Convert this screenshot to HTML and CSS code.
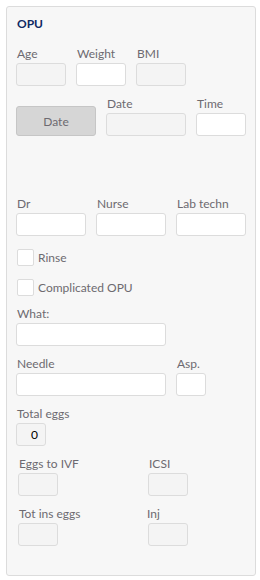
FILE: index.html
```
<!DOCTYPE html>
<html>
<head>
<meta charset="utf-8">
<link rel="stylesheet" href="styles.css">
</head>
<body>
<div class="panel">
  <div class="title">OPU</div>

  <div class="row">
    <div class="field w50"><label class="lbl">Age</label><div class="inp dis"></div></div>
    <div class="field w50"><label class="lbl">Weight</label><div class="inp"></div></div>
    <div class="field w50"><label class="lbl">BMI</label><div class="inp dis"></div></div>
  </div>

  <div class="row bottom">
    <button class="btn">Date</button>
    <div class="field w80"><label class="lbl">Date</label><div class="inp dis"></div></div>
    <div class="field w50"><label class="lbl">Time</label><div class="inp"></div></div>
  </div>

  <div class="spacer"></div>

  <div class="row">
    <div class="field w70"><label class="lbl">Dr</label><div class="inp"></div></div>
    <div class="field w70"><label class="lbl">Nurse</label><div class="inp"></div></div>
    <div class="field w70"><label class="lbl">Lab techn</label><div class="inp"></div></div>
  </div>

  <div class="check"><span class="box"></span><span class="ctext">Rinse</span></div>
  <div class="check"><span class="box"></span><span class="ctext">Complicated OPU</span></div>

  <div class="row">
    <div class="field w150"><label class="lbl">What:</label><div class="inp"></div></div>
  </div>

  <div class="row">
    <div class="field w150"><label class="lbl">Needle</label><div class="inp"></div></div>
    <div class="field w30"><label class="lbl">Asp.</label><div class="inp"></div></div>
  </div>

  <div class="row">
    <div class="field w30"><label class="lbl">Total eggs</label><div class="inp dis num">0</div></div>
  </div>

  <div class="row pair">
    <div class="field w40"><label class="lbl">Eggs to IVF</label><div class="inp dis"></div></div>
    <div class="field w40"><label class="lbl">ICSI</label><div class="inp dis"></div></div>
  </div>

  <div class="row pair">
    <div class="field w40"><label class="lbl">Tot ins eggs</label><div class="inp dis"></div></div>
    <div class="field w40"><label class="lbl inj">Inj</label><div class="inp dis"></div></div>
  </div>
</div>
</body>
</html>
```
FILE: styles.css
```
* { box-sizing: border-box; }
html, body { margin: 0; padding: 0; background: #ffffff; }
body {
  font-family: Lato, "Open Sans", "Liberation Sans", sans-serif;
  font-size: 12px;
  color: #6d6a70;
}
.panel {
  margin: 6px 0 0 6px;
  width: 250px;
  height: 570px;
  border: 1px solid #dcdcdc;
  border-radius: 3px;
  background: #f7f7f7;
  padding: 9px 9px 0 9px;
  display: flex;
  flex-direction: column;
  gap: 10px;
}
.title {
  font-weight: bold;
  color: #0f2a63;
  line-height: 16px;
  height: 16px;
  margin-left: 1px;
  margin-bottom: 4px;
}
.row {
  display: flex;
  gap: 10px;
}
.row.bottom { align-items: flex-end; }
.row.pair { padding-left: 2px; gap: 90px; }
.field {
  display: flex;
  flex-direction: column;
}
.lbl {
  display: block;
  line-height: 16px;
  height: 16px;
  margin-bottom: 1px;
  padding-left: 1px;
  white-space: nowrap;
}
.lbl.inj { margin-left: -2px; }
.inp {
  height: 23px;
  border: 1px solid #dcdcdc;
  border-radius: 3px;
  background: #ffffff;
  color: #000;
}
.inp.dis { background: #f4f4f4; }
.inp.num {
  text-align: right;
  padding-right: 7px;
  line-height: 21px;
  font-weight: normal;
}
.w30 { width: 30px; }
.w40 { width: 40px; }
.w50 { width: 50px; }
.w70 { width: 70px; }
.w80 { width: 80px; }
.w150 { width: 150px; }
.btn {
  width: 80px;
  height: 30px;
  margin: 0;
  padding: 0;
  border: 1px solid #c6c6c6;
  border-radius: 3px;
  background: #d6d6d6;
  font-family: inherit;
  font-size: 12px;
  color: #6d6a70;
}
.spacer { height: 40px; }
.check {
  display: flex;
  align-items: center;
  height: 17px;
  margin-top: 3px;
  padding-left: 1px;
  gap: 4px;
}
.box {
  width: 17px;
  height: 17px;
  border: 1px solid #dcdcdc;
  border-radius: 2px;
  background: #fff;
}
.ctext { line-height: 17px; }
```
